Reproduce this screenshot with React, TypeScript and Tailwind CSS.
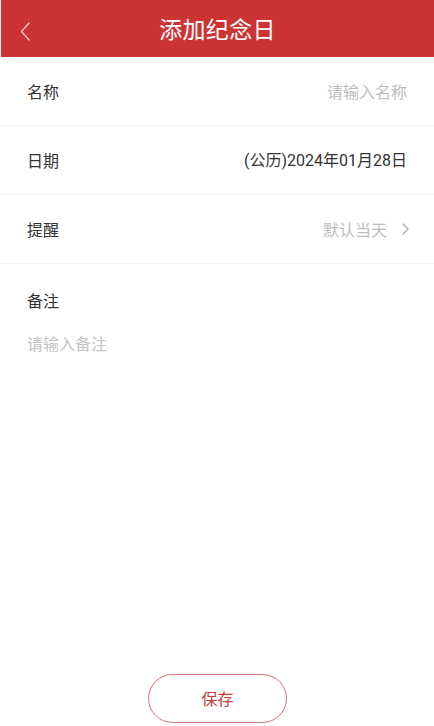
import { useState } from "react";

const font = { fontFamily: '"Noto Sans CJK SC", "Noto Sans", sans-serif' };
const dateFont = { fontFamily: 'Roboto, "Noto Sans CJK SC", sans-serif' };

function Row({
  label,
  children,
}: {
  label: string;
  children: React.ReactNode;
}) {
  return (
    <div className="flex h-[69px] items-center justify-between border-b border-[#f3f3f3] pl-[27px] pr-[27px]">
      <span className="text-[16px] leading-[22px] text-[#333]">{label}</span>
      {children}
    </div>
  );
}

export default function App() {
  const [name, setName] = useState("");
  const [note, setNote] = useState("");

  return (
    <div style={font} className="flex h-[726px] w-[434px] flex-col bg-white">
      <header className="relative ml-px flex h-[57px] shrink-0 items-center justify-center bg-[#cc3434]">
        <button className="absolute left-[16px] top-[19px] p-[3px]" aria-label="返回">
          <svg width="10" height="19" viewBox="0 0 10 19" fill="none">
            <path d="M9 1L1.5 9.5L9 18" stroke="#f2c6c6" strokeWidth="1.4" strokeLinecap="round" strokeLinejoin="round" />
          </svg>
        </button>
        <h1 className="-mt-[2px] text-[23px] leading-[30px] tracking-[0.3px] text-white">添加纪念日</h1>
      </header>

      <Row label="名称">
        <input
          value={name}
          onChange={(e) => setName(e.target.value)}
          placeholder="请输入名称"
          className="w-40 bg-transparent text-right text-[16px] text-[#333] outline-none placeholder:text-[#bdbdbd]"
        />
      </Row>
      <Row label="日期">
        <span style={dateFont} className="pt-[2px] text-[16px] leading-[22px] text-[#333]">
          (公历)2024年01月28日
        </span>
      </Row>
      <Row label="提醒">
        <span className="-mr-[2px] flex items-center gap-[15px] text-[16px] leading-[22px] text-[#bdbdbd]">
          默认当天
          <svg width="7" height="12" viewBox="0 0 7 12" fill="none">
            <path d="M1 1L6 6L1 11" stroke="#aaa" strokeWidth="1.3" strokeLinecap="round" strokeLinejoin="round" />
          </svg>
        </span>
      </Row>

      <div className="flex flex-col px-[27px] pt-[25px]">
        <span className="text-[16px] leading-[22px] text-[#333]">备注</span>
        <textarea
          value={note}
          onChange={(e) => setNote(e.target.value)}
          placeholder="请输入备注"
          rows={3}
          className="mt-[21px] resize-none bg-transparent text-[16px] leading-[22px] text-[#333] outline-none placeholder:text-[#c4c4c4]"
        />
      </div>

      <div className="flex-1" />

      <div className="mb-[3px] flex justify-center">
        <button className="ml-[1px] flex h-[49px] w-[139px] items-center justify-center rounded-full border border-[#d27474] pb-[2px] text-[16px] text-[#c43c3c]">
          保存
        </button>
      </div>
    </div>
  );
}
